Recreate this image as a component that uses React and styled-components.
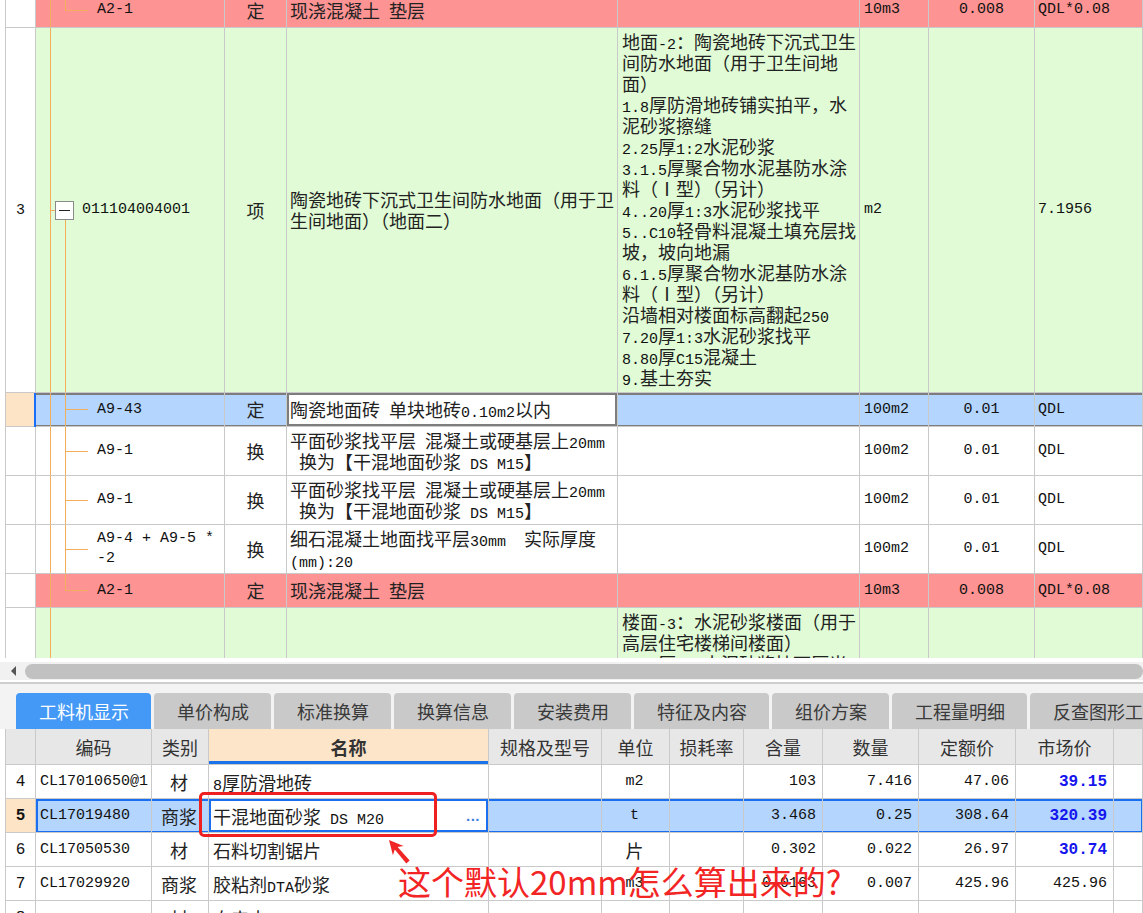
import React from 'react';
import styled, { createGlobalStyle, css } from 'styled-components';

const GRID = '#c9c9c9';
const ORANGE = '#f3ae5c';
const RED = '#fe9393';
const GREEN = '#e0fbd5';
const BLUE = '#b4d5fd';
const PEACH = '#fde4c6';

const GlobalStyle = createGlobalStyle`
  html, body {
    margin: 0;
    padding: 0;
    background: #fff;
  }
  body {
    overflow: hidden;
  }
  * {
    box-sizing: border-box;
  }
`;

/* --- tree connector lines, drawn as background layers of the code cell --- */

const seg = (x, y, w, h) => `linear-gradient(${ORANGE}, ${ORANGE}) ${x} ${y} / ${w} ${h} no-repeat`;

const treeLines = {
  trunk: [seg('14px', '0', '1px', '100%')],
  parent: [
    seg('14px', '0', '1px', '100%'),
    seg('14px', '50%', '5px', '1px'),
    seg('29px', '100%', '1px', 'calc(50% - 10px)'),
  ],
  child: [
    seg('14px', '0', '1px', '100%'),
    seg('29px', '0', '1px', '100%'),
    seg('29px', '50%', '23px', '1px'),
  ],
  last: [
    seg('14px', '0', '1px', '100%'),
    seg('29px', '0', '1px', '50%'),
    seg('29px', '50%', '23px', '1px'),
  ],
};

const topRows = [
  { h: 35, bg: RED, tree: 'last', code: ['A2-1'], kind: '定', name: ['现浇混凝土 垫层'], unit: '10m3', qty: '0.008', expr: 'QDL*0.08' },
  {
    h: 365, bg: GREEN, num: '3', tree: 'parent', folder: true, code: ['011104004001'], kind: '项',
    name: ['陶瓷地砖下沉式卫生间防水地面（用于卫', '生间地面）（地面二）'],
    feature: [
      '地面-2：陶瓷地砖下沉式卫生',
      '间防水地面（用于卫生间地',
      '面）',
      '1.8厚防滑地砖铺实拍平，水',
      '泥砂浆擦缝',
      '2.25厚1:2水泥砂浆',
      '3.1.5厚聚合物水泥基防水涂',
      '料（Ⅰ型）（另计）',
      '4..20厚1:3水泥砂浆找平',
      '5..C10轻骨料混凝土填充层找',
      '坡，坡向地漏',
      '6.1.5厚聚合物水泥基防水涂',
      '料（Ⅰ型）（另计）',
      '沿墙相对楼面标高翻起250',
      '7.20厚1:3水泥砂浆找平',
      '8.80厚C15混凝土',
      '9.基土夯实',
    ],
    unit: 'm2', expr: '7.1956',
  },
  { h: 34, bg: BLUE, selected: true, tree: 'child', code: ['A9-43'], kind: '定', name: ['陶瓷地面砖 单块地砖0.10m2以内'], unit: '100m2', qty: '0.01', expr: 'QDL' },
  { h: 49, bg: '#fff', tree: 'child', code: ['A9-1'], kind: '换', name: ['平面砂浆找平层 混凝土或硬基层上20mm', ' 换为【干混地面砂浆 DS M15】'], unit: '100m2', qty: '0.01', expr: 'QDL' },
  { h: 49, bg: '#fff', tree: 'child', code: ['A9-1'], kind: '换', name: ['平面砂浆找平层 混凝土或硬基层上20mm', ' 换为【干混地面砂浆 DS M15】'], unit: '100m2', qty: '0.01', expr: 'QDL' },
  { h: 49, bg: '#fff', tree: 'child', code: ['A9-4 + A9-5 *', '-2'], kind: '换', name: ['细石混凝土地面找平层30mm  实际厚度', '(mm):20'], unit: '100m2', qty: '0.01', expr: 'QDL' },
  { h: 34, bg: RED, tree: 'last', code: ['A2-1'], kind: '定', name: ['现浇混凝土 垫层'], unit: '10m3', qty: '0.008', expr: 'QDL*0.08' },
  {
    h: 70, bg: GREEN, tree: 'trunk', code: [], kind: '', name: [],
    feature: ['楼面-3：水泥砂浆楼面（用于', '高层住宅楼梯间楼面）', '1.20厚1:2水泥砂浆抹面压光'],
  },
];

const tabs = ['工料机显示', '单价构成', '标准换算', '换算信息', '安装费用', '特征及内容', '组价方案', '工程量明细', '反查图形工程量'];

const headers = ['编码', '类别', '名称', '规格及型号', '单位', '损耗率', '含量', '数量', '定额价', '市场价', ''];

const bottomRows = [
  { num: '4', code: 'CL17010650@1', kind: '材', name: '8厚防滑地砖', unit: 'm2', amount: '103', qty: '7.416', base: '47.06', market: '39.15', hot: true },
  { num: '5', code: 'CL17019480', kind: '商浆', name: '干混地面砂浆 DS M20', unit: 't', amount: '3.468', qty: '0.25', base: '308.64', market: '320.39', hot: true, selected: true },
  { num: '6', code: 'CL17050530', kind: '材', name: '石料切割锯片', unit: '片', amount: '0.302', qty: '0.022', base: '26.97', market: '30.74', hot: true },
  { num: '7', code: 'CL17029920', kind: '商浆', name: '胶粘剂DTA砂浆', unit: 'm3', amount: '0.0163', qty: '0.007', base: '425.96', market: '425.96' },
  { num: '8', code: '', kind: '材', name: '自来水', unit: '', amount: '', qty: '', base: '', market: '' },
];

// ascii runs get the narrow half-width face, like the original grid font
function mix(text) {
  return text.split(/([\x20-\x7E]+)/).map((part, i) => {
    if (!part) return null;
    return /^[\x20-\x7E]+$/.test(part) ? <Latin key={i}>{part}</Latin> : part;
  });
}

function Lines({ lines }) {
  return lines.map((l, i) => <Line key={i}>{mix(l)}</Line>);
}

function TopRow({ row }) {
  return (
    <TRow $h={row.h}>
      <NumCell $active={row.selected}>{row.num}</NumCell>
      <TBody $bg={row.bg} $selected={row.selected}>
        <CodeCell $tree={row.tree} $indent={row.folder ? 19 : 61}>
          {row.folder ? (
            <FolderLine>
              <Fold />
              <Mono>{row.code[0]}</Mono>
            </FolderLine>
          ) : (
            row.code.map((c, i) => <Mono key={i}>{c}</Mono>)
          )}
        </CodeCell>
        <Cell $align="center">{row.kind}</Cell>
        <Cell $edit={row.selected}>
          <Lines lines={row.name} />
        </Cell>
        <Cell $top={!!row.feature} $pad={4}>
          {row.feature && <Lines lines={row.feature} />}
        </Cell>
        <Cell $pad={4}>
          <Mono>{row.unit}</Mono>
        </Cell>
        <Cell $align="center">
          <Mono>{row.qty}</Mono>
        </Cell>
        <Cell>
          <Mono>{row.expr}</Mono>
        </Cell>
      </TBody>
    </TRow>
  );
}

function BottomRow({ row }) {
  return (
    <BRow>
      <BNum $active={row.selected}>{row.num}</BNum>
      <BBody $selected={row.selected}>
        <BCell $mono>{row.code}</BCell>
        <BCell $align="center">{row.kind}</BCell>
        <BCell $edit={row.selected}>
          <span>{mix(row.name)}</span>
          {row.selected && <More>...</More>}
        </BCell>
        <BCell />
        <BCell $align="center">{mix(row.unit)}</BCell>
        <BCell />
        <BCell $align="right" $mono>{row.amount}</BCell>
        <BCell $align="right" $mono>{row.qty}</BCell>
        <BCell $align="right" $mono>{row.base}</BCell>
        <BCell $align="right" $mono $hot={row.hot}>{row.market}</BCell>
        <BCell />
      </BBody>
    </BRow>
  );
}

export default function App() {
  return (
    <>
      <GlobalStyle />
      <Page>
        <TopGrid>
          <TopRows>
            {topRows.map((row, i) => (
              <TopRow key={i} row={row} />
            ))}
          </TopRows>
        </TopGrid>

        <HScroll>
          <Track>
            <ArrowLeft />
            <Thumb />
          </Track>
        </HScroll>

        <TabBar>
          {tabs.map((t, i) => (
            <Tab key={t} $active={i === 0}>{t}</Tab>
          ))}
        </TabBar>

        <BottomGrid>
          <BRow $header>
            <BNum $header />
            <BBody>
              {headers.map((h, i) => (
                <HeadCell key={i} $sorted={h === '名称'}>{h}</HeadCell>
              ))}
            </BBody>
          </BRow>
          {bottomRows.map((row) => (
            <BottomRow key={row.num} row={row} />
          ))}
        </BottomGrid>

        <MarkBox />
        <MarkArrow viewBox="0 0 34 34" width="34" height="34">
          <polygon
            points="7,6 10.9,21.2 12.8,15.5 24.3,29.4 27.7,26.6 15.6,13.1 21.5,12"
            fill="#f02626"
          />
        </MarkArrow>
        <MarkText>这个默认20mm怎么算出来的?</MarkText>
      </Page>
    </>
  );
}

/* --- page --- */

const Page = styled.div`
  position: relative;
  width: 1143px;
  height: 913px;
  overflow: hidden;
  background: #fff;
  font-family: "Noto Sans CJK SC", sans-serif;
  font-size: 18px;
  color: #222;
  display: flex;
  flex-direction: column;
`;

const Latin = styled.span`
  font-family: "Liberation Mono", "Noto Sans CJK SC", monospace;
  font-size: 15px;
  line-height: 1;
  color: #111;
`;

const Mono = styled.div`
  font-family: "Liberation Mono", "Noto Sans CJK SC", monospace;
  font-size: 15px;
  color: #111;
  white-space: pre;
  line-height: 20px;
`;

const Line = styled.div`
  white-space: pre;
  height: 21px;
  line-height: 21px;
`;

/* --- upper grid --- */

const TopGrid = styled.div`
  height: 658px;
  flex-shrink: 0;
  overflow: hidden;
`;

const TopRows = styled.div`
  margin-top: -7px;
`;

const TRow = styled.div`
  display: flex;
  height: ${p => p.$h}px;
  padding-left: 5px;
`;

const NumCell = styled.div`
  width: 31px;
  flex-shrink: 0;
  display: flex;
  align-items: center;
  justify-content: center;
  background: ${p => (p.$active ? PEACH : '#fff')};
  border-left: 1px solid ${GRID};
  border-right: 1px solid ${GRID};
  border-bottom: 1px solid ${GRID};
  font-family: "Liberation Mono", monospace;
  font-size: 15px;
  color: #111;
`;

const TBody = styled.div`
  flex: 1;
  display: grid;
  grid-template-columns: 189px 62px 331px 242px 69px 106px 1fr;
  background: ${p => p.$bg};

  ${p => p.$selected && css`
    box-shadow: inset 0 2px #7d7d7d, inset 0 -2px #7d7d7d, -2px 0 #1a6ef5;
  `}
`;

const Cell = styled.div`
  display: flex;
  flex-direction: column;
  justify-content: ${p => (p.$top ? 'flex-start' : 'center')};
  align-items: ${p => (p.$align === 'center' ? 'center' : 'flex-start')};
  padding: ${p => (p.$top ? '3px' : '0')} 3px 0 ${p => p.$pad ?? 3}px;
  border-right: 1px solid ${GRID};
  border-bottom: 1px solid ${GRID};
  overflow: hidden;
  line-height: 21px;

  ${p => p.$edit && css`
    background: #fff;
    box-shadow: inset 0 0 0 2px #7d7d7d;
  `}
`;

const CodeCell = styled(Cell)`
  padding-left: ${p => p.$indent}px;
  background: ${p => treeLines[p.$tree].join(', ')};
`;

const FolderLine = styled.div`
  display: flex;
  align-items: center;
`;

const Fold = styled.span`
  width: 19px;
  height: 19px;
  margin-right: 8px;
  border: 1px solid #8a8a8a;
  background: #fff;
  display: inline-flex;
  align-items: center;
  justify-content: center;

  &::after {
    content: '';
    width: 11px;
    height: 1px;
    background: #222;
  }
`;

/* --- horizontal scrollbar --- */

const HScroll = styled.div`
  height: 26px;
  flex-shrink: 0;
  padding-top: 4px;
  border-bottom: 2px solid #cecece;
  background: #fff;
`;

const Track = styled.div`
  height: 18px;
  display: flex;
  align-items: center;
  background: #f1f1f1;
  padding-left: 11px;
`;

const ArrowLeft = styled.span`
  width: 0;
  height: 0;
  border-top: 5px solid transparent;
  border-bottom: 5px solid transparent;
  border-right: 5px solid #555;
`;

const Thumb = styled.div`
  flex: 1;
  height: 15px;
  margin-left: 9px;
  border-radius: 8px;
  background: #c1c1c1;
`;

/* --- tabs --- */

const TabBar = styled.div`
  height: 45px;
  flex-shrink: 0;
  display: flex;
  align-items: flex-end;
  gap: 3px;
  padding-left: 16px;
  background: #f3f3f3;
  overflow: hidden;
`;

const Tab = styled.div`
  flex-shrink: 0;
  height: 36px;
  padding: 0 22px 0 23px;
  display: flex;
  align-items: center;
  border-radius: 4px 4px 0 0;
  font-size: 18px;
  white-space: nowrap;
  background: ${p => (p.$active ? '#4499f7' : '#c9c9c9')};
  color: ${p => (p.$active ? '#fff' : '#3a3a3a')};
`;

/* --- lower grid --- */

const BottomGrid = styled.div`
  flex: 1;
  overflow: hidden;
  background: #fff;
`;

const BRow = styled.div`
  display: flex;
  height: ${p => (p.$header ? 36 : 34)}px;
  padding-left: 5px;
`;

const BNum = styled(NumCell)`
  background: ${p => (p.$header ? '#e7e7e7' : p.$active ? PEACH : '#fff')};
  font-weight: ${p => (p.$active ? 700 : 400)};
  font-size: 16px;
`;

const BBody = styled.div`
  flex: 1;
  display: grid;
  grid-template-columns: 116px 57px 280px 113px 68px 74px 79px 96px 97px 98px 1fr;

  ${p => p.$selected && css`
    background: ${BLUE};
    box-shadow: inset 0 0 0 2px #1a6ff0;
  `}
`;

const BCell = styled.div`
  display: flex;
  align-items: center;
  justify-content: ${p => (p.$align === 'center' ? 'center' : p.$align === 'right' ? 'flex-end' : 'space-between')};
  padding: 0 6px 0 4px;
  border-right: 1px solid ${GRID};
  border-bottom: 1px solid ${GRID};
  white-space: pre;
  overflow: hidden;

  ${p => p.$mono && css`
    font-family: "Liberation Mono", monospace;
    font-size: 15px;
    color: #111;
  `}

  ${p => p.$hot && css`
    color: #1515ee;
    font-weight: 700;
    font-size: 16px;
  `}

  ${p => p.$edit && css`
    background: #fff;
    box-shadow: inset 0 0 0 2px #1a6ff0;
    padding-right: 8px;
  `}
`;

const More = styled.span`
  font-family: "Liberation Sans", sans-serif;
  font-weight: 700;
  color: #3d7fe0;
  font-size: 15px;
  letter-spacing: 0.5px;
`;

const HeadCell = styled.div`
  display: flex;
  align-items: center;
  justify-content: center;
  background: ${p => (p.$sorted ? '#fde5c9' : '#e7e7e7')};
  font-weight: ${p => (p.$sorted ? 700 : 400)};
  color: #333;
  border-right: 1px solid ${GRID};
  border-bottom: 1px solid ${GRID};
  white-space: nowrap;

  ${p => p.$sorted && css`
    box-shadow: inset 0 -3px #1a73e8;
  `}
`;

/* --- red annotation laid over the screenshot --- */

const MarkBox = styled.div`
  position: absolute;
  left: 199px;
  top: 792px;
  width: 238px;
  height: 45px;
  border: 3px solid #ee2020;
  border-radius: 5px;
`;

const MarkArrow = styled.svg`
  position: absolute;
  left: 382px;
  top: 834px;
`;

const MarkText = styled.div`
  position: absolute;
  left: 398px;
  top: 864px;
  font-family: "Noto Sans CJK SC", sans-serif;
  font-size: 33px;
  line-height: 34px;
  color: #f22424;
  white-space: nowrap;
`;
